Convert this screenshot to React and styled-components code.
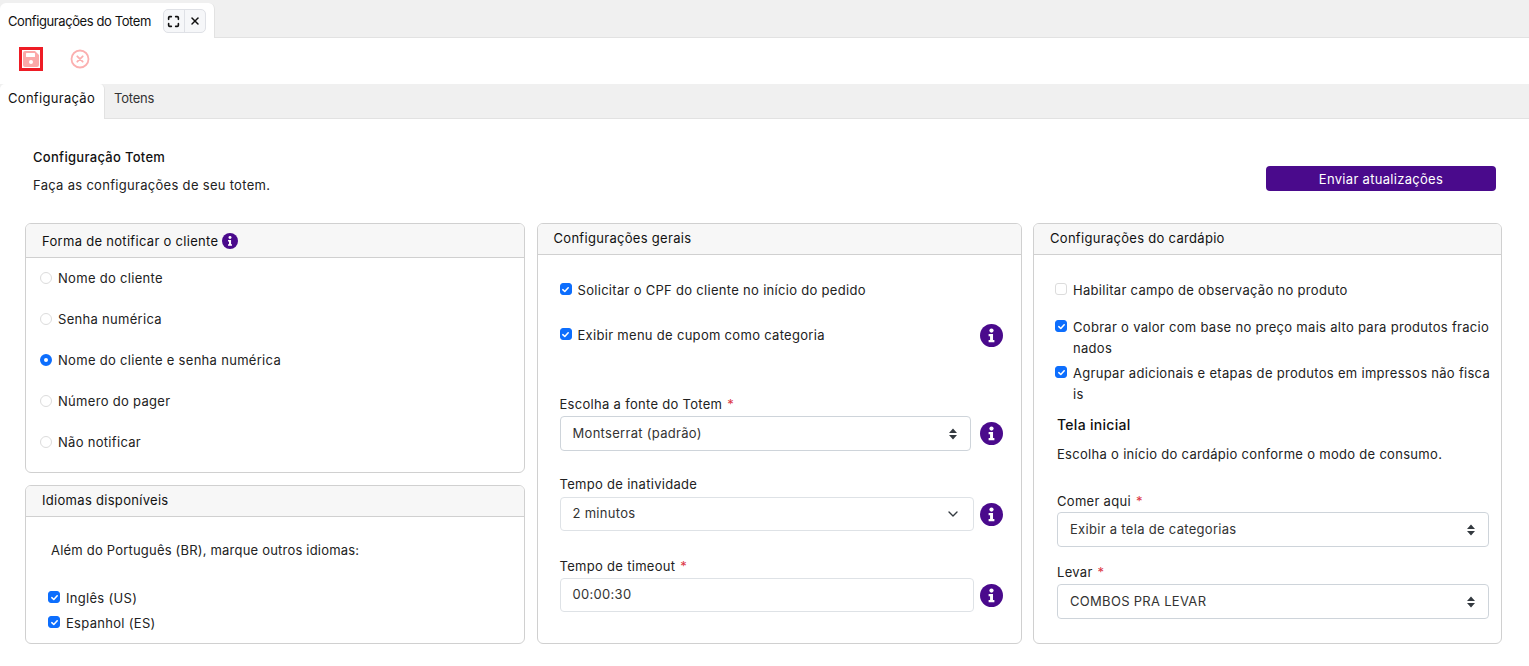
import React from 'react';
import styled, { createGlobalStyle } from 'styled-components';
import { ChevronDown, Maximize, X } from 'lucide-react';

const GlobalStyle = createGlobalStyle`
  * { box-sizing: border-box; }
  html, body { margin: 0; height: 100%; background: #fff; overflow: hidden; }
  body { font-family: 'Inter', 'Liberation Sans', sans-serif; font-size: 13px; color: #212529; letter-spacing: 0.3px; }
`;

const Page = styled.div`
  width: 1529px;
  height: 666px;
  overflow: hidden;
`;

// Window tab strip
const WindowTabs = styled.div`
  height: 38px;
  background: #f0f0f0;
  border-bottom: 1px solid #e2e2e2;
  display: flex;
  align-items: flex-start;
`;

const WindowTab = styled.div`
  width: 215px;
  height: 35px;
  margin-top: 3px;
  background: #fff;
  border-right: 1px solid #e2e2e2;
  border-radius: 6px 6px 0 0;
  display: flex;
  align-items: center;
  padding: 1px 0 0 8px;
  letter-spacing: -0.4px;
  color: #111;
`;

const TabActions = styled.div`
  margin-left: 12px;
  display: flex;
  width: 43px;
  height: 24px;
  background: #f6f7f9;
  border: 1px solid #dfe1e6;
  border-radius: 5px;
`;

const TabAction = styled.span`
  flex: 1;
  display: flex;
  align-items: center;
  justify-content: center;
  color: #111;
  & + & { border-left: 1px solid #dfe1e6; }
`;

const Toolbar = styled.div`
  height: 46px;
  display: flex;
  align-items: center;
  padding: 0 0 4px 19px;
  gap: 27px;
`;

const SaveFrame = styled.span`
  width: 24px;
  height: 24px;
  border: 3px solid #ee1c25;
  display: flex;
  align-items: center;
  justify-content: center;
`;

const SubTabs = styled.div`
  height: 35px;
  background: #f0f0f0;
  border-bottom: 1px solid #e2e2e2;
  display: flex;
`;

const SubTab = styled.div`
  height: 35px;
  width: ${p => (p.$active ? '105px' : 'auto')};
  padding: 0 0 7px ${p => (p.$active ? '8px' : '9px')};
  display: flex;
  align-items: center;
  letter-spacing: ${p => (p.$active ? '0.3px' : '-0.2px')};
  color: ${p => (p.$active ? '#111' : '#333')};
  ${p => p.$active && 'background: #fff; border-right: 1px solid #e2e2e2; border-radius: 5px 5px 0 0;'}
`;

const Content = styled.div`
  padding: 30px 27px 0 25px;
`;

const Intro = styled.div`
  display: flex;
  justify-content: space-between;
  align-items: flex-start;
  padding: 0 6px 0 8px;
  height: 74px;
`;

const IntroTitle = styled.div`
  font-weight: 500;
  color: #111;
  line-height: 17px;
`;

const IntroText = styled.div`
  margin-top: 11px;
  line-height: 17px;
  color: #222;
`;

const SendButton = styled.button`
  width: 230px;
  height: 25px;
  margin-top: 17px;
  background: #4a0a8c;
  color: #fff;
  border: 0;
  border-radius: 4px;
  font: inherit;
  letter-spacing: 0.3px;
`;

const Columns = styled.div`
  display: grid;
  grid-template-columns: 500px 485px 469px;
  column-gap: 11.5px;
  height: 421px;
`;

const Stack = styled.div`
  display: flex;
  flex-direction: column;
  gap: 12px;
`;

const Panel = styled.section`
  border: 1px solid #d0d0d0;
  border-radius: 6px;
  background: #fff;
  height: ${p => p.$h || '421px'};
  overflow: hidden;
`;

const PanelHead = styled.header`
  height: ${p => p.$h || '31px'};
  background: #f7f7f7;
  border-bottom: 1px solid #d0d0d0;
  padding: 0 0 ${p => (p.$h ? '0' : '3px')} 16px;
  display: flex;
  align-items: center;
  gap: 4px;
  color: #111;
`;

const RadioRow = styled.label`
  height: 41px;
  padding: 0 0 1px 14px;
  display: flex;
  align-items: center;
  gap: 6px;
  color: #222;
`;

const RadioDot = styled.span`
  width: 12px;
  height: 12px;
  border-radius: 50%;
  background: #fff;
  border: ${p => (p.$on ? '4px solid #0d6efd' : '1px solid #dcdcdc')};
`;

const CheckBox = styled.span`
  width: 12px;
  height: 12px;
  flex: none;
  border-radius: 3px;
  background: ${p => (p.$on ? '#0d6efd' : '#fff')};
  border: 1px solid ${p => (p.$on ? '#0d6efd' : '#dcdcdc')};
  display: flex;
  align-items: center;
  justify-content: center;
`;

const CheckRow = styled.div`
  display: flex;
  align-items: flex-start;
  gap: 6px;
  line-height: 21px;
  margin-top: ${p => p.$mt || '0'};
  word-break: break-all;
  color: #222;
  & > ${CheckBox} { margin-top: 3px; }
`;

const LangBody = styled.div`
  padding: 25px 0 0 22px;
`;

const LangNote = styled.div`
  padding-left: 3px;
  line-height: 17px;
  margin-bottom: 29px;
  letter-spacing: 0.2px;
  color: #222;
`;

const GeneralBody = styled.div`
  padding: 25px 18px 0 22px;
`;

const InfoRow = styled.div`
  display: flex;
  align-items: center;
  justify-content: space-between;
  margin-top: ${p => p.$mt || '0'};
`;

const FieldLabel = styled.div`
  line-height: 17px;
  margin-top: ${p => p.$mt || '0'};
  margin-bottom: ${p => p.$mb || '4px'};
  color: #222;
`;

const Required = styled.span`
  color: #dc3545;
  margin-left: 1px;
`;

const FieldRow = styled.div`
  display: flex;
  align-items: center;
  gap: ${p => p.$gap || '6px'};
`;

const SelectBox = styled.div`
  flex: 1;
  height: ${p => p.$h || '35px'};
  border: 1px solid ${p => (p.$soft ? '#dee2e6' : '#ced4da')};
  border-radius: 4px;
  padding: 0 12px 2px;
  display: flex;
  align-items: center;
  justify-content: space-between;
  color: #333;
  background: #fff;
  font-size: 13px;
`;

const MenuBody = styled.div`
  padding: 25px 10px 0 21px;
`;

const SubHeading = styled.div`
  margin: 10px 0 0 2px;
  font-size: 14px;
  font-weight: 500;
  line-height: 20px;
  color: #111;
`;

const SubText = styled.div`
  margin: 9px 0 29px 2px;
  line-height: 20px;
  color: #222;
`;

const MenuFields = styled.div`
  margin: 0 2px;
`;

const InfoIcon = ({ size = 23 }) => (
  <svg width={size} height={size} viewBox="0 0 24 24" style={{ flex: 'none' }}>
    <circle cx="12" cy="12" r="12" fill="#4a0a8c" />
    <circle cx="12" cy="6.8" r="2.2" fill="#fff" />
    <path d="M9 10.5h4.6v6.2H15v2.3H9v-2.3h1.5v-3.9H9z" fill="#fff" />
  </svg>
);

const SortArrows = () => (
  <svg width="10" height="14" viewBox="0 0 10 14" style={{ marginTop: 2 }}>
    <path d="M5 1.5 9 6H1zM5 12.5 1 8h8z" fill="#343a40" />
  </svg>
);

const Tick = () => (
  <svg width="9" height="9" viewBox="0 0 10 10">
    <path d="M2 5.2 4.2 7.2 8 3" fill="none" stroke="#fff" strokeWidth="1.7" strokeLinecap="round" strokeLinejoin="round" />
  </svg>
);

const SaveIcon = () => (
  <svg width="16" height="16" viewBox="0 0 16 16">
    <path d="M2 0h10l4 4v10a2 2 0 0 1-2 2H2a2 2 0 0 1-2-2V2a2 2 0 0 1 2-2z" fill="#fba8a8" />
    <rect x="3" y="2" width="9" height="4" rx="0.5" fill="#fff" />
    <circle cx="8" cy="11" r="2" fill="#fff" />
  </svg>
);

const CancelIcon = () => (
  <svg width="20" height="20" viewBox="0 0 20 20">
    <circle cx="10" cy="10" r="8.5" fill="none" stroke="#fbb0b0" strokeWidth="1.8" />
    <path d="M7.3 7.3l5.4 5.4M12.7 7.3l-5.4 5.4" stroke="#fbb0b0" strokeWidth="1.8" strokeLinecap="round" />
  </svg>
);

const Check = ({ on, children, mt }) => (
  <CheckRow $mt={mt}>
    <CheckBox $on={on}>{on && <Tick />}</CheckBox>
    <span>{children}</span>
  </CheckRow>
);

const notifyOptions = ['Nome do cliente', 'Senha numérica', 'Nome do cliente e senha numérica', 'Número do pager', 'Não notificar'];

export default function App() {
  return (
    <Page>
      <GlobalStyle />
      <WindowTabs>
        <WindowTab>
          Configurações do Totem
          <TabActions>
            <TabAction><Maximize size={13} strokeWidth={3} /></TabAction>
            <TabAction><X size={12} strokeWidth={3} /></TabAction>
          </TabActions>
        </WindowTab>
      </WindowTabs>
      <Toolbar>
        <SaveFrame><SaveIcon /></SaveFrame>
        <CancelIcon />
      </Toolbar>
      <SubTabs>
        <SubTab $active>Configuração</SubTab>
        <SubTab>Totens</SubTab>
      </SubTabs>
      <Content>
        <Intro>
          <div>
            <IntroTitle>Configuração Totem</IntroTitle>
            <IntroText>Faça as configurações de seu totem.</IntroText>
          </div>
          <SendButton>Enviar atualizações</SendButton>
        </Intro>
        <Columns>
          <Stack>
            <Panel $h="250px">
              <PanelHead $h="34px">
                Forma de notificar o cliente <InfoIcon size={16} />
              </PanelHead>
              <div>
                {notifyOptions.map((label, i) => (
                  <RadioRow key={label}>
                    <RadioDot $on={i === 2} />
                    {label}
                  </RadioRow>
                ))}
              </div>
            </Panel>
            <Panel $h="159px">
              <PanelHead>Idiomas disponíveis</PanelHead>
              <LangBody>
                <LangNote>Além do Português (BR), marque outros idiomas:</LangNote>
                <Check on>Inglês (US)</Check>
                <Check on mt="4px">Espanhol (ES)</Check>
              </LangBody>
            </Panel>
          </Stack>
          <Panel>
            <PanelHead>Configurações gerais</PanelHead>
            <GeneralBody>
              <Check on>Solicitar o CPF do cliente no início do pedido</Check>
              <InfoRow $mt="23px">
                <Check on>Exibir menu de cupom como categoria</Check>
                <InfoIcon />
              </InfoRow>
              <FieldLabel $mt="49px" $mb="3px">Escolha a fonte do Totem <Required>*</Required></FieldLabel>
              <FieldRow $gap="9px">
                <SelectBox>Montserrat (padrão)<SortArrows /></SelectBox>
                <InfoIcon />
              </FieldRow>
              <FieldLabel $mt="25px">Tempo de inatividade</FieldLabel>
              <FieldRow>
                <SelectBox $soft $h="34px">2 minutos<ChevronDown size={16} color="#343a40" style={{ marginTop: 2 }} /></SelectBox>
                <InfoIcon />
              </FieldRow>
              <FieldLabel $mt="27px" $mb="3px">Tempo de timeout <Required>*</Required></FieldLabel>
              <FieldRow>
                <SelectBox $soft $h="34px">00:00:30</SelectBox>
                <InfoIcon />
              </FieldRow>
            </GeneralBody>
          </Panel>
          <Panel>
            <PanelHead>Configurações do cardápio</PanelHead>
            <MenuBody>
              <Check>Habilitar campo de observação no produto</Check>
              <Check on mt="16px">Cobrar o valor com base no preço mais alto para produtos fracionados</Check>
              <Check on mt="4px">Agrupar adicionais e etapas de produtos em impressos não fiscais</Check>
              <SubHeading>Tela inicial</SubHeading>
              <SubText>Escolha o início do cardápio conforme o modo de consumo.</SubText>
              <MenuFields>
                <FieldLabel $mb="2px">Comer aqui <Required>*</Required></FieldLabel>
                <SelectBox>Exibir a tela de categorias<SortArrows /></SelectBox>
                <FieldLabel $mt="17px" $mb="3px">Levar <Required>*</Required></FieldLabel>
                <SelectBox>COMBOS PRA LEVAR<SortArrows /></SelectBox>
              </MenuFields>
            </MenuBody>
          </Panel>
        </Columns>
      </Content>
    </Page>
  );
}
